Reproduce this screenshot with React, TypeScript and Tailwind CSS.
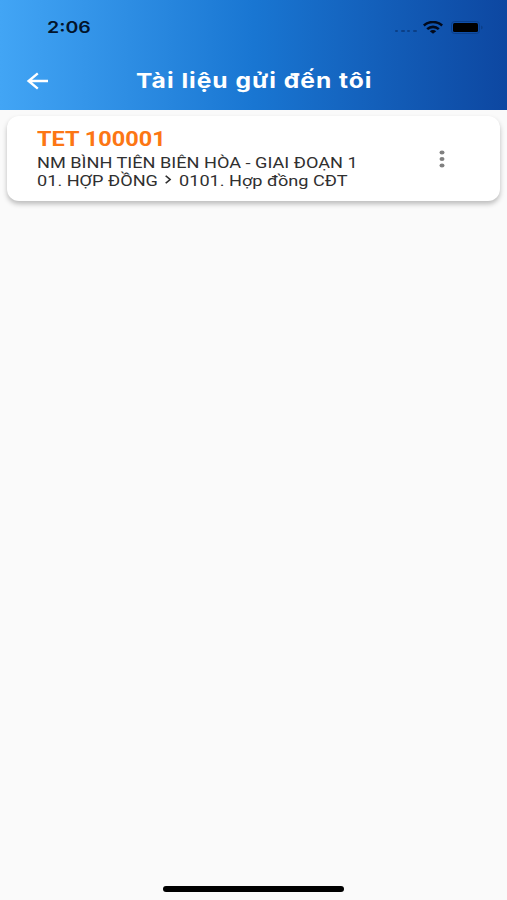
const DOCUMENTS = [
  {
    code: 'TET 100001',
    project: 'NM BÌNH TIÊN BIÊN HÒA - GIAI ĐOẠN 1',
    folder: '01. HỢP ĐỒNG',
    subfolder: '0101. Hợp đồng CĐT',
  },
]

function StatusBar() {
  return (
    <div className="flex h-[54px] items-center justify-between pl-[47px] pr-[23px]">
      <span className="origin-left scale-x-[1.22] font-['Inter',sans-serif] text-[16px] font-semibold leading-none text-[#03142b]">2:06</span>
      <div className="flex items-center">
        <svg width="24" height="4" viewBox="0 0 24 4" className="mr-[5px] mt-[8px]" fill="#0b3f86">
          <rect x="1" y="1" width="3" height="2" rx="1" />
          <rect x="7" y="1" width="4" height="2" rx="1" />
          <rect x="13" y="1" width="3" height="2" rx="1" />
          <rect x="19" y="1" width="4" height="2" rx="1" />
        </svg>
        <svg width="20" height="13" viewBox="0 0 20 13" fill="none" stroke="#020a1c" strokeWidth="2.6">
          <path d="M0.8 4.5C6 -0.1 14 -0.1 19.2 4.5" />
          <path d="M4.2 8.1C7.6 5.1 12.4 5.1 15.8 8.1" />
          <path d="M10 12.8L6.8 10.3C8.7 8.7 11.3 8.7 13.2 10.3Z" fill="#020a1c" stroke="none" />
        </svg>
        <svg width="33" height="13" viewBox="0 0 33 13" className="ml-[8px]">
          <rect x="0.5" y="0.5" width="28" height="12" rx="3" fill="none" stroke="#0a3f8c" />
          <rect x="2" y="2" width="25" height="9" rx="1.5" fill="#000" />
          <path d="M30.3 4.5C32 5.2 32 7.8 30.3 8.5Z" fill="#0a3a80" />
        </svg>
      </div>
    </div>
  )
}

function AppBar() {
  return (
    <div className="flex h-[54px] items-center pl-[26px]">
      <svg width="23" height="18" viewBox="0 0 23 18" fill="none" stroke="#fff" strokeWidth="2.4">
        <path d="M22 9H2.5M11.8 1.4L2.6 9L11.8 16.6" />
      </svg>
      <h1 className="ml-[87px] origin-left scale-x-[1.2] whitespace-nowrap font-['Inter',sans-serif] text-[20.5px] font-bold leading-none tracking-[0.83px] text-white">
        Tài liệu gửi đến tôi
      </h1>
    </div>
  )
}

export default function App() {
  return (
    <div className="flex h-[900px] w-[507px] flex-col overflow-hidden bg-[#fafafa] font-['Roboto',sans-serif]">
      <header className="h-[110px] shrink-0 bg-[linear-gradient(to_right,#42a5f5,#1976d2,#0d47a1)]">
        <StatusBar />
        <AppBar />
      </header>

      <main className="flex-1 px-[7px] pt-[6px]">
        {DOCUMENTS.map((d) => (
          <article key={d.code} className="flex h-[85px] items-center rounded-xl bg-white pl-[30px] pr-[55px] shadow-[0_3px_5px_rgba(0,0,0,0.25)]">
            <div className="min-w-0 flex-1 whitespace-nowrap">
              <h2 className="-mt-px mb-px w-max origin-left scale-x-[1.22] text-[19.3px] font-bold leading-[26px] text-[#fc7614]">{d.code}</h2>
              <p className="w-max origin-left scale-x-[1.17] text-[15.5px] leading-[18px] text-[#303030]">{d.project}</p>
              <p className="flex w-max origin-left scale-x-[1.17] items-center text-[15.5px] leading-[18px] text-[#303030]">
                {d.folder}
                <svg width="6" height="9" viewBox="0 0 6 9" className="mx-[6px] -mt-[3px]" fill="none" stroke="#303030" strokeWidth="1.5">
                  <path d="M1 0.8L4.8 4.5L1 8.2" />
                </svg>
                {d.subfolder}
              </p>
            </div>
            <svg width="6" height="18" viewBox="0 0 6 18" fill="#808080">
              <ellipse cx="3" cy="2.6" rx="2.5" ry="2" />
              <ellipse cx="3" cy="9" rx="2.5" ry="2" />
              <ellipse cx="3" cy="15.4" rx="2.5" ry="2" />
            </svg>
          </article>
        ))}
      </main>

      <footer className="flex justify-center pb-[8px]">
        <div className="h-[6px] w-[181px] rounded-full bg-black" />
      </footer>
    </div>
  )
}
